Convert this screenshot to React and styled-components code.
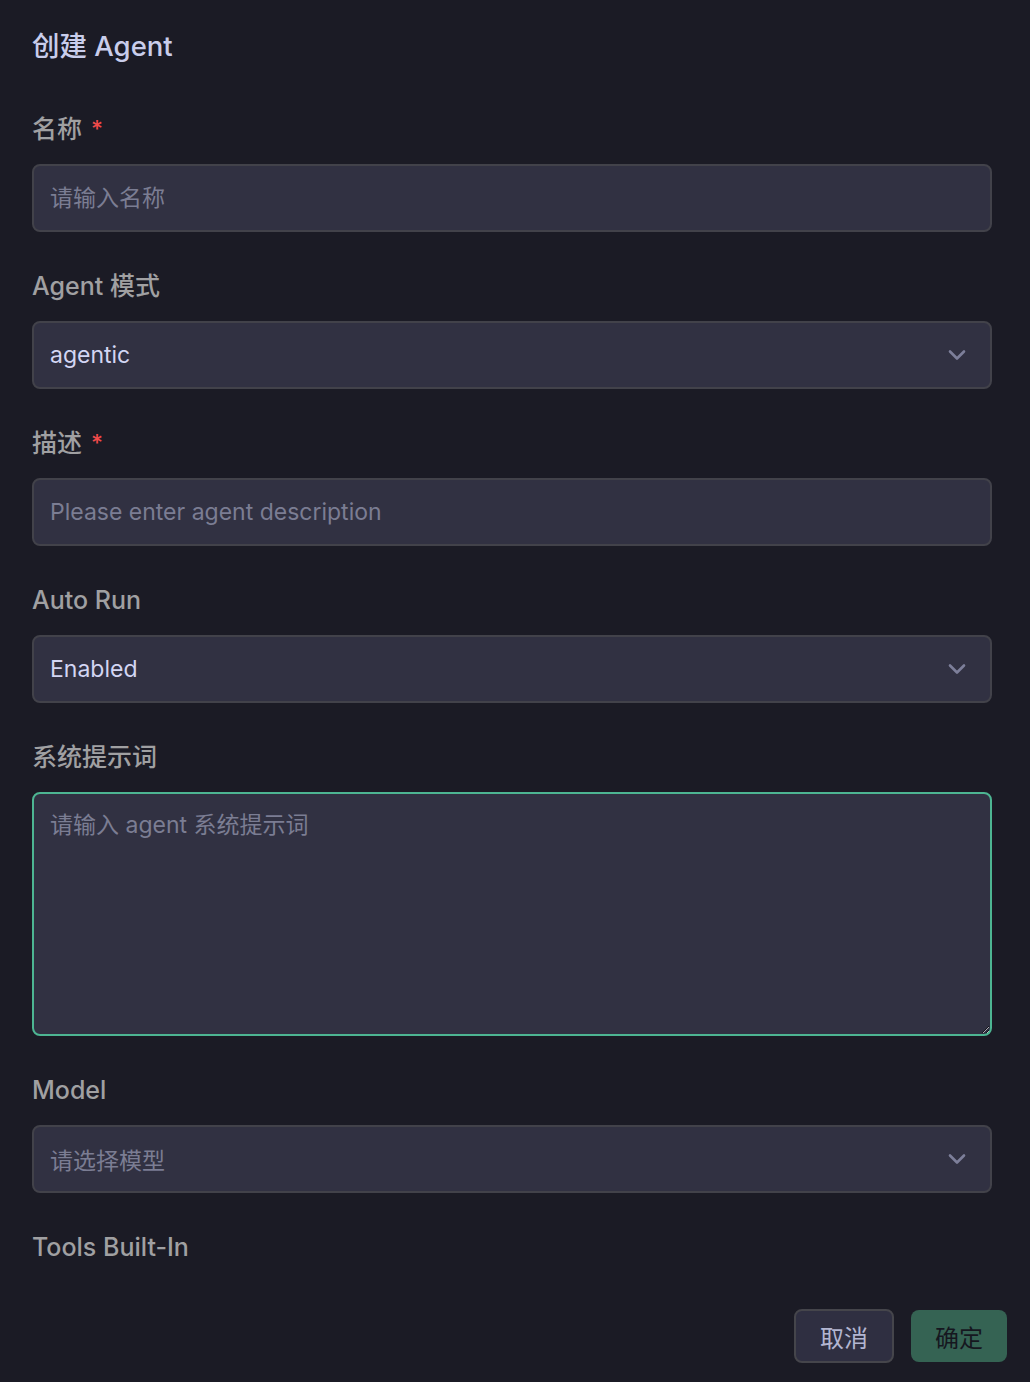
import React from 'react'
import styled, { createGlobalStyle } from 'styled-components'

const GlobalStyle = createGlobalStyle`
  html, body {
    margin: 0;
    padding: 0;
    background: #1b1b25;
  }
  * {
    box-sizing: border-box;
  }
`

const font = `'Inter', 'Noto Sans CJK SC', sans-serif`

const Dialog = styled.div`
  width: 1030px;
  height: 1382px;
  background-color: #1b1b25;
  display: flex;
  flex-direction: column;
  font-family: ${font};
  color-scheme: dark;
`

const Title = styled.h2`
  margin: 0;
  padding: 28px 32px 0;
  font-size: 27.5px;
  line-height: 36px;
  font-weight: 500;
  color: #c9cdeb;
`

const Form = styled.form`
  flex: 1;
  display: flex;
  flex-direction: column;
  gap: 36px;
  padding: 47px 38px 0 32px;
`

const Field = styled.div`
  display: flex;
  flex-direction: column;
  gap: 17px;
`

const Label = styled.label`
  font-size: 25px;
  line-height: 36px;
  font-weight: 500;
  color: #a0a0a2;
  span {
    color: #f04a4a;
    margin-left: 9px;
    font-size: 23px;
    vertical-align: top;
  }
`

const Input = styled.input`
  width: 100%;
  height: 68px;
  padding: 0 16px;
  background-color: #313142;
  border: 2px solid #42424a;
  border-radius: 8px;
  font-family: ${font};
  font-size: 23px;
  color: #d3d6f3;
  outline: none;
  &::placeholder {
    color: #7b7d93;
  }
`

const SelectBox = styled.div`
  height: 68px;
  padding: 0 23px 0 16px;
  background-color: #313142;
  border: 2px solid #42424a;
  border-radius: 8px;
  display: flex;
  align-items: center;
  justify-content: space-between;
  font-size: 23px;
  color: ${props => (props.placeholder ? '#7b7d93' : '#d3d6f3')};
`

const TextArea = styled.textarea`
  width: 100%;
  height: 244px;
  padding: 14px 16px;
  background-color: #313142;
  border: 2px solid #4db592;
  border-radius: 8px;
  font-family: ${font};
  font-size: 23px;
  line-height: 34px;
  color: #d3d6f3;
  outline: none;
  resize: vertical;
  &::placeholder {
    color: #7b7d93;
  }
`

const Footer = styled.div`
  display: flex;
  justify-content: flex-end;
  align-items: center;
  gap: 17px;
  padding: 0 23px 19px 0;
`

const Button = styled.button`
  height: ${props => (props.primary ? '52px' : '54px')};
  padding: 0 24px;
  border-radius: 8px;
  font-family: ${font};
  font-size: 24px;
  cursor: pointer;
  border: ${props => (props.primary ? 'none' : '2px solid #45454b')};
  background-color: ${props => (props.primary ? '#356353' : '#2f2f41')};
  color: ${props => (props.primary ? '#16171f' : '#b3b6d1')};
`

const Chevron = () => (
  <svg width="20" height="12" viewBox="0 0 20 12" fill="none">
    <path
      d="M3 2.5l7 7 7-7"
      stroke="#7d7f9a"
      strokeWidth="2.6"
      strokeLinecap="round"
      strokeLinejoin="round"
    />
  </svg>
)

const Select = ({ value, placeholder }) => (
  <SelectBox placeholder={value ? undefined : 'true'}>
    {value || placeholder}
    <Chevron />
  </SelectBox>
)

export default function App() {
  return (
    <>
      <GlobalStyle />
      <Dialog>
        <Title>创建 Agent</Title>
        <Form onSubmit={e => e.preventDefault()}>
          <Field>
            <Label>
              名称<span>*</span>
            </Label>
            <Input placeholder="请输入名称" />
          </Field>
          <Field>
            <Label>Agent 模式</Label>
            <Select value="agentic" />
          </Field>
          <Field>
            <Label>
              描述<span>*</span>
            </Label>
            <Input placeholder="Please enter agent description" />
          </Field>
          <Field>
            <Label>Auto Run</Label>
            <Select value="Enabled" />
          </Field>
          <Field>
            <Label>系统提示词</Label>
            <TextArea placeholder="请输入 agent 系统提示词" />
          </Field>
          <Field>
            <Label>Model</Label>
            <Select placeholder="请选择模型" />
          </Field>
          <Field>
            <Label>Tools Built-In</Label>
          </Field>
        </Form>
        <Footer>
          <Button>取消</Button>
          <Button primary>确定</Button>
        </Footer>
      </Dialog>
    </>
  )
}
